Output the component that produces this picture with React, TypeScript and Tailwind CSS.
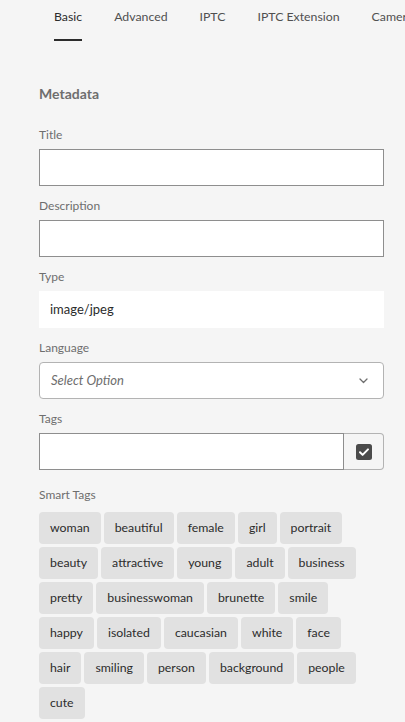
import React from "react";

const tabs = ["Basic", "Advanced", "IPTC", "IPTC Extension", "Camera Data"];

const smartTags = [
  "woman", "beautiful", "female", "girl", "portrait",
  "beauty", "attractive", "young", "adult", "business",
  "pretty", "businesswoman", "brunette", "smile",
  "happy", "isolated", "caucasian", "white", "face",
  "hair", "smiling", "person", "background", "people",
  "cute",
];

const font = { fontFamily: "Lato, 'Open Sans', sans-serif" };

function Label({ children }: { children: React.ReactNode }) {
  return <div className="text-[12px] leading-[16px] text-[#6e6e6e] mb-[6px]">{children}</div>;
}

export default function App() {
  return (
    <div className="min-h-[722px] w-[405px] bg-[#f5f5f5] overflow-hidden" style={font}>
      {/* Tab list */}
      <div className="flex gap-8 pl-[54px] whitespace-nowrap overflow-hidden">
        {tabs.map((t, i) => (
          <div
            key={t}
            className={`h-[41px] pt-[9px] text-[12.3px] leading-[16px] shrink-0 ${
              i === 0 ? "text-[#2c2c2c] border-b-2 border-[#2c2c2c]" : "text-[#505050]"
            }`}
          >
            {t}
          </div>
        ))}
      </div>

      <div className="pl-[39px] pr-[21px] pt-[43px]">
        <h2 className="text-[14px] leading-[20px] font-bold text-[#6e6e6e] mb-[23px]">Metadata</h2>

        <div className="flex flex-col gap-3">
          <div>
            <Label>Title</Label>
            <div className="h-[37px] bg-white border border-[#8e8e8e]" />
          </div>
          <div>
            <Label>Description</Label>
            <div className="h-[37px] bg-white border border-[#8e8e8e]" />
          </div>
          <div>
            <Label>Type</Label>
            <div className="h-[37px] bg-white flex items-center pl-[11px] text-[13px] text-[#2c2c2c]">
              image/jpeg
            </div>
          </div>
          <div>
            <Label>Language</Label>
            <div className="h-[37px] bg-white border border-[#b3b3b3] rounded-[4px] flex items-center justify-between pl-[11px] pr-[15px]">
              <span className="text-[13px] italic text-[#6e6e6e]">Select Option</span>
              <svg width="9" height="6" viewBox="0 0 9 6" fill="none">
                <path d="M1 1l3.5 3.5L8 1" stroke="#6e6e6e" strokeWidth="1.3" strokeLinecap="round" strokeLinejoin="round" />
              </svg>
            </div>
          </div>
          <div>
            <Label>Tags</Label>
            <div className="flex h-[37px]">
              <div className="flex-1 bg-white border border-[#8e8e8e]" />
              <div className="w-[40px] flex items-center justify-center border border-l-0 border-[#b3b3b3] rounded-r-[4px] bg-[#f5f5f5]">
                <svg width="16" height="16" viewBox="0 0 16 16">
                  <rect width="16" height="16" rx="2.5" fill="#4b4b4b" />
                  <path d="M4 8.3l2.6 2.6L12 5.4" stroke="white" strokeWidth="2" fill="none" strokeLinecap="round" strokeLinejoin="round" />
                </svg>
              </div>
            </div>
          </div>
        </div>

        <div className="mt-[17px]">
          <div className="text-[12px] leading-[16px] text-[#6e6e6e] mb-[9px]">Smart Tags</div>
          <div className="flex flex-wrap pr-[2px]">
            {smartTags.map((tag) => (
              <span
                key={tag}
                className="h-[32px] mr-[3px] mb-[3px] px-[11px] flex items-center rounded-[4px] bg-[#e1e1e1] text-[12.3px] text-[#2c2c2c]"
              >
                {tag}
              </span>
            ))}
          </div>
        </div>
      </div>
    </div>
  );
}
